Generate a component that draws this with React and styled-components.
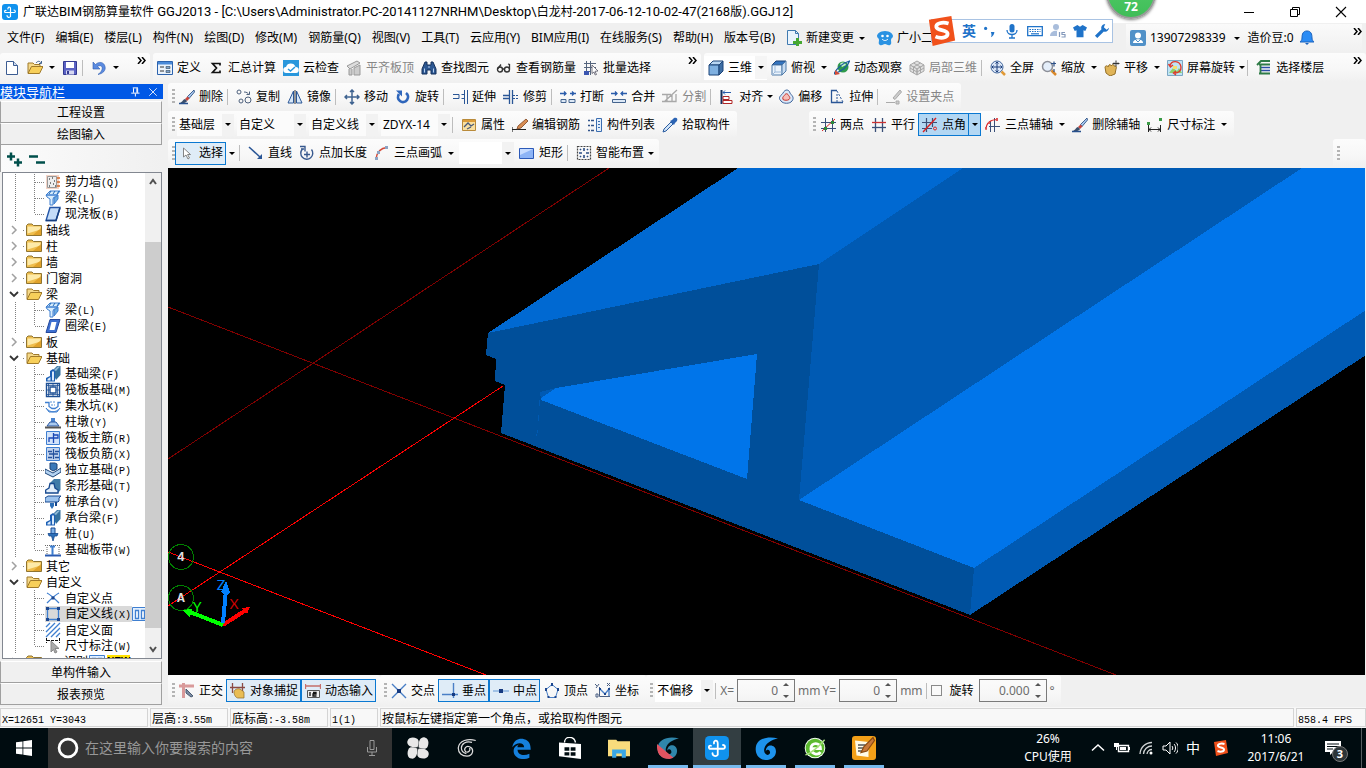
import React from 'react';
import styled, { createGlobalStyle } from 'styled-components';

const GlobalStyle = createGlobalStyle`
    * { box-sizing: border-box; }
    body {
        margin: 0;
        overflow: hidden;
        background: #f0f0f0;
        color: #000;
        font: 12px/16px "Noto Sans", "Noto Sans CJK SC", sans-serif;
    }
    button, input, select {
        font: inherit;
        color: inherit;
        margin: 0;
    }
    button { border: 0; padding: 0; background: none; }
    ul { list-style: none; margin: 0; padding: 0; }
    svg { flex: none; display: block; }
`;

const simsun = '"Noto Sans CJK SC", sans-serif';

const Window = styled.div`
    display: flex;
    flex-direction: column;
    height: 100vh;
`;

/* ---------- title and menu ---------- */

const TitleBar = styled.header`
    position: relative;
    display: flex;
    align-items: center;
    height: 23px;
    flex: none;
    padding: 0 2px;
    background: #fff;
`;

const Title = styled.h1`
    flex: 1;
    margin: 0 0 0 5px;
    font-size: 12px;
    font-weight: normal;
    white-space: nowrap;
`;

const TitleLatin = styled.span`
    font: 13px/16px Roboto, sans-serif;
`;

const WindowButton = styled.button`
    display: flex;
    justify-content: center;
    width: 46px;
    height: 22px;
    align-items: center;
`;

const Ball = styled.div`
    position: absolute;
    top: -33px;
    right: 210px;
    width: 50px;
    height: 52px;
    padding-top: 30px;
    border: 2px solid #9a9a9a;
    border-radius: 50%;
    background: linear-gradient(#58d06c, #3fbd58);
    box-shadow: 0 1px 3px rgba(0, 0, 0, 0.5);
    color: #fff;
    font-weight: bold;
    text-align: center;
    z-index: 2;
`;

const Ime = styled.div`
    position: absolute;
    top: 19px;
    right: 253px;
    display: flex;
    align-items: center;
    gap: 7px;
    width: 182px;
    height: 24px;
    padding-left: 30px;
    border: 1px solid #a9c3e3;
    background: #fff;
    color: #1f73c9;
    font-weight: bold;
    font-size: 14px;
    z-index: 2;
`;

const ImeLogo = styled.span`
    position: absolute;
    left: -5px;
    top: -4px;
`;

const MenuBar = styled.nav`
    display: flex;
    align-items: center;
    flex: none;
    height: 30px;
    padding: 0 4px 0 7px;
    gap: 11px;
`;

const MenuItem = styled.button`
    display: flex;
    align-items: center;
    gap: 4px;
    white-space: nowrap;
`;

const Account = styled.div`
    display: flex;
    align-items: center;
    gap: 5px;
    height: 28px;
    margin-left: auto;
    padding-left: 4px;
    width: 236px;
    background: linear-gradient(#fafafa, #f0f0f0);
`;

/* ---------- toolbars ---------- */

const ToolRow = styled.div`
    display: flex;
    flex: none;
    height: ${p => p.$h || 28}px;
    gap: ${p => p.$close ? 0 : 3}px;
    padding-bottom: 1px;
`;

const Bar = styled.div`
    display: flex;
    align-items: center;
    flex: ${p => p.$grow ? '1 1 0' : 'none'};
    width: ${p => p.$w ? p.$w + 'px' : 'auto'};
    margin-left: ${p => p.$push || '0'};
    padding: 0 4px 0 ${p => p.$grip ? 4 : 0}px;
    border-radius: 3px;
    background: linear-gradient(#fcfcfc, #f7f7f7 60%, #f0f0f0);
`;

const Grip = styled.i`
    width: 3px;
    height: 15px;
    flex: none;
    background: repeating-linear-gradient(#b4b4b4 0 2px, transparent 2px 4px);
`;

const ToolButton = styled.button`
    display: flex;
    align-items: center;
    gap: 4px;
    flex: none;
    height: 23px;
    padding: 0 2px 0 3px;
    border: 1px solid ${p => p.$on ? '#0a78d1' : 'transparent'};
    background: ${p => p.$on === 'deep' ? '#b3d7f3' : p.$on ? '#dfecf7' : 'transparent'};
    color: ${p => p.disabled ? '#868686' : '#000'};
    white-space: nowrap;
`;

const Split = styled.div`
    display: flex;
    align-items: center;
    height: 24px;
    background: #fff;
`;

const ArrowButton = styled.button`
    display: flex;
    align-items: center;
    justify-content: center;
    flex: none;
    width: ${p => p.$tight ? 8 : 12}px;
    height: 23px;
    border: ${p => p.$on ? '1px solid #0a78d1' : '0'};
    border-left: 0;
    background: ${p => p.$on ? '#b3d7f3' : p.$plain ? '#f5f5f5' : 'transparent'};
`;

const Triangle = styled.i`
    border: 3px solid transparent;
    border-top-color: currentColor;
    border-bottom: 0;
`;

const Separator = styled.i`
    width: 1px;
    height: 16px;
    margin: 0 4px 0 1px;
    background: #bdbdbd;
`;

const More = styled.button`
    margin: 4px 0 0 auto;
    align-self: flex-start;
`;

const ComboBox = styled.label`
    display: flex;
    align-items: center;
    flex: none;
    height: 22px;
    width: ${p => p.$w}px;
    margin: 0 1px 0 2px;
    background: ${p => p.$white ? '#fff' : '#fbfbfb'};
`;

const Select = styled.select`
    flex: 1;
    min-width: 0;
    height: 22px;
    padding: 0 0 0 2px;
    border: 0;
    background: transparent;
    appearance: none;
`;

const ComboArrow = styled.span`
    display: flex;
    align-items: center;
    justify-content: center;
    width: 12px;
    height: 22px;
    background: #f2f2f2;
`;

const Spin = styled.label`
    display: flex;
    align-items: center;
    flex: none;
    gap: 3px;
    margin-right: 2px;
    color: #6d6d6d;
`;

const SpinBox = styled.span`
    display: flex;
    align-items: center;
    width: ${p => p.$wide ? 68 : 58}px;
    height: 23px;
    border: 1px solid #7a7a7a;
`;

const SpinInput = styled.input`
    flex: 1;
    min-width: 0;
    height: 20px;
    border: 0;
    padding: 0;
    background: transparent;
    text-align: right;
`;

const SpinArrows = styled.span`
    display: flex;
    flex-direction: column;
    justify-content: space-between;
    width: 16px;
    height: 15px;
    align-items: center;
`;

const UpDown = styled.i`
    border: 3px solid transparent;
    border-${p => p.$up ? 'bottom' : 'top'}-color: #555;
    border-${p => p.$up ? 'top' : 'bottom'}: 0;
`;

const Check = styled.label`
    display: flex;
    align-items: center;
    gap: 8px;
    margin-right: 5px;
`;

const Tick = styled.input`
    appearance: none;
    width: 11px;
    height: 11px;
    border: 1px solid #8a8a8a;
    background: #fafafa;
`;

/* ---------- navigation panel ---------- */

const Body = styled.div`
    display: flex;
    flex: 1;
    min-height: 0;
`;

const Panel = styled.aside`
    display: flex;
    flex-direction: column;
    flex: none;
    width: 164px;
    padding: 1px 1px 2px 0;
    margin-right: 4px;
    font-family: ${simsun};
`;

const PanelTitle = styled.div`
    display: flex;
    align-items: center;
    flex: none;
    gap: 6px;
    height: 15px;
    padding-right: 4px;
    margin-bottom: 2px;
    background: #0058e6;
    color: #fff;
    font-size: 13px;
    line-height: 15px;
`;

const PanelName = styled.span`
    flex: 1;
`;

const PanelButton = styled.button`
    flex: none;
    height: 22px;
    margin-right: 1px;
    border: 1px solid #a0a0a0;
    border-top-color: #fff;
    background: #f0f0f0;
    line-height: 18px;
`;

const PanelTools = styled.div`
    display: flex;
    align-items: center;
    flex: none;
    gap: 7px;
    height: 27px;
    padding-left: 5px;
    border-left: 1px solid #a0a0a0;
    background: linear-gradient(90deg, #fbfbfb, #f0f0f0);
`;

const TreeBox = styled.div`
    display: flex;
    flex: 1;
    min-height: 0;
    margin: 0 1px 2px 2px;
    border: 1px solid #828790;
    background: #fff;
`;

const Tree = styled.ul`
    flex: 1;
    min-width: 0;
    padding-top: 1px;
    overflow: hidden;
`;

const Row = styled.li`
    display: flex;
    align-items: center;
    height: 16px;
    white-space: nowrap;
`;

const Chevron = styled.button`
    width: 10px;
    height: 16px;
    margin: 0 4px 0 6px;
`;

const Dots = styled.i`
    width: ${p => p.$w}px;
    height: 1px;
    flex: none;
    margin-right: 1px;
    background: repeating-linear-gradient(90deg, #808080 0 1px, transparent 1px 2px);
`;

const Guide = styled.i`
    width: 1px;
    height: ${p => p.$half ? 8 : 16}px;
    align-self: flex-start;
    flex: none;
    margin-left: ${p => p.$root ? 12 : 18}px;
    background: repeating-linear-gradient(#808080 0 1px, transparent 1px 2px);
`;

const Node = styled.button`
    display: flex;
    align-items: center;
    gap: 4px;
    height: 16px;
    padding-right: 1px;
    background: ${p => p.$on ? '#d9d9d9' : 'transparent'};
`;

const Latin = styled.span`
    font: 10px/16px "Liberation Mono", monospace;
`;

const NewTag = styled.b`
    margin-left: 2px;
    background: #ffe100;
    font: bold 10px/14px "Liberation Sans", sans-serif;
`;

const Scroll = styled.div`
    display: flex;
    flex-direction: column;
    width: 16px;
    background: #f0f0f0;
`;

const ScrollButton = styled.button`
    display: flex;
    align-items: center;
    justify-content: center;
    height: 18px;
`;

const Thumb = styled.div`
    flex: 1;
    margin: 51px 0 12px;
    background: #cdcdcd;
`;

/* ---------- work area ---------- */

const Work = styled.main`
    display: flex;
    flex-direction: column;
    flex: 1;
    min-width: 0;
`;

const View = styled.div`
    flex: 1;
    min-height: 0;
    margin-right: 1px;
    background: #000;
`;

const Drawing = styled.svg`
    width: 100%;
    height: 100%;
`;

const StatusBar = styled.footer`
    display: flex;
    flex: none;
    gap: 2px;
    height: 21px;
    padding: 1px 0;
    background: #f7f7f7;
    font-family: ${simsun};
`;

const Cell = styled.span`
    flex: ${p => p.$w ? 'none' : 1};
    width: ${p => p.$w}px;
    padding-left: 1px;
    border: 1px solid #d4d4d4;
    line-height: 17px;
    white-space: nowrap;
    background: #f8f8f8;
`;

/* ---------- taskbar ---------- */

const Taskbar = styled.footer`
    display: flex;
    align-items: center;
    flex: none;
    height: 40px;
    background: #000c10;
    color: #fff;
`;

const Start = styled.button`
    display: flex;
    align-items: center;
    justify-content: center;
    width: 48px;
    height: 40px;
`;

const Search = styled.label`
    display: flex;
    align-items: center;
    gap: 6px;
    width: 344px;
    height: 40px;
    padding: 0 12px 0 9px;
    background: #333;
`;

const SearchInput = styled.input`
    flex: 1;
    min-width: 0;
    border: 0;
    padding: 0;
    background: transparent;
    font-size: 14px;
    &::placeholder { color: #989898; opacity: 1; }
`;

const AppGroup = styled.div`
    display: flex;
    gap: 1px;
    margin-left: ${p => p.$gap}px;
`;

const AppButton = styled.button`
    display: flex;
    align-items: center;
    justify-content: center;
    width: 48px;
    height: 40px;
    background: ${p => p.$active
        ? 'linear-gradient(#333e42 37px, #76b9ed 37px)'
        : p.$open ? 'linear-gradient(#76b9ed, #76b9ed) center bottom / 40px 3px no-repeat' : 'none'};
`;

const Tray = styled.div`
    display: flex;
    align-items: center;
    gap: 8px;
    height: 40px;
    margin-left: auto;
`;

const TwoLines = styled.div`
    text-align: center;
    line-height: 18px;
    width: ${p => p.$w}px;
`;

const Lang = styled.span`
    margin-right: 5px;
    font-size: 14px;
`;

const Notice = styled.span`
    position: relative;
    width: 26px;
    padding-left: 2px;
`;

const NoticeCount = styled.b`
    position: absolute;
    left: 9px;
    top: 6px;
    width: 16px;
    height: 16px;
    border: 1px solid #777;
    border-radius: 50%;
    background: #2c3538;
    font-size: 11px;
    line-height: 14px;
    text-align: center;
`;

const ShowDesktop = styled.i`
    width: 5px;
    height: 40px;
    border-left: 1px solid #555d60;
    margin-left: 4px;
`;

/* ---------- icons, all on a 16px grid ---------- */

const navy = '#1d4478';
const blue = '#3f7fd0';

const brush = <>
    <path d="M15 1 8.500 7.500 10 9.500 15.500 3z" fill="#a9c8ef" stroke={navy} strokeWidth=".8" />
    <path d="M8.500 7.500 6 10l2 2 2.500-2.500z" fill="#c8453b" />
    <path d="M6 10c-2 0-2 3-5 3.500 3 1.500 6 .5 7-1.500z" fill="#3b4f6b" />
    <path d="M0 14.500h9" stroke="#27508e" strokeWidth="1.500" />
</>;
const folderBody = <>
    <path d="M.5 3.500 2 2h4l1.500 1.500h8v10H.5z" fill="#efbe4e" stroke="#8f7430" />
    <path d="M1.500 4.500h13v3l-13 4z" fill="#fdeaa9" />
    <path d="M15 6v7H7z" fill="#d58f14" opacity=".6" />
</>;
const folderOpen = <>
    <path d="M1 13V3h5l1.500 1.500H13V7" fill="#f5d98a" stroke="#a07a2a" />
    <path d="M1 13.500 4.500 6.500H16L12.500 13.500z" fill="#f7cf5a" stroke="#a07a2a" />
</>;
const magnify = <>
    <circle cx="6.500" cy="6.500" r="5" fill="#e4eefa" stroke="#8c8f98" strokeWidth="1.500" />
    <path d="m10.500 10.500 4.500 4.500" stroke="#d9892b" strokeWidth="2.500" />
</>;
const beamBlue = <>
    <path d="M7 5 12 0h3.500v9L11 14z" fill="#33719f" />
    <path d="M1 15.500V12l4-2V5l3-2 2 2v10.500z" fill="#1c5fb4" />
    <path d="M2.500 14.500V13l3-2v3.500zM7 14.500V6l1-1 1 1v8.500z" fill="#d9eafb" />
    <path d="m9 4 4-3.500h2L11 5z" fill="#8fb9d6" />
</>;

const icons = {
    newFile: <><path d="M2.500 1.500h7l4 4v9h-11z" fill="#fff" stroke="#3c5c92" /><path d="M9.500 1.500v4h4" fill="#cfdcf0" stroke="#3c5c92" /></>,
    open: <>{folderOpen}<path d="M9 3c2-2.500 4-2 5 0M14.500 1v2.500H12" fill="none" stroke="#44648e" /></>,
    save: <><path d="M1.500 1.500h13v13h-13z" fill="#5b62c4" stroke="#343a92" /><path d="M4 2h8v6H4z" fill="#fff" /><path d="M4 10.500h8v4H4z" fill="#d6d8f1" /><path d="M5 11h2v3H5z" fill="#343a92" /></>,
    undo: <path d="M2 2v7h7L6.500 6.500c3-2 5.500 0 4.500 3-.5 2-2 3.500-4 5 5-1 8-4 7-8C13 2 8 1 4.500 4.500z" fill="#5b8be0" stroke="#2e5db0" strokeWidth=".6" />,
    define: <><path d="M.5 1.500h15v13H.5z" fill="#eaf2fb" stroke="#2c63ae" /><path d="M1 2h14v2.500H1z" fill="#4a8ad8" /><path d="M3 7h4M3 11h4" stroke="#333" /><path d="M9 6.500h4v2H9zM9 10.500h4v2H9z" fill="#7da3cf" stroke="#345" strokeWidth=".6" /></>,
    sigma: <path d="M12 5.500V3.500H4.500L8.500 8l-4 4.500H12v-2" fill="none" stroke="#111" strokeWidth="1.700" />,
    cloudCheck: <><path d="M0 0h16v16H0z" fill="#2997dc" /><path d="M3.500 13a3 3 0 0 1-.5-6 5 5 0 0 1 9.500 0 3 3 0 0 1 .5 6z" fill="#fff" /><path d="m5 9 2.500 2 4.500-4" fill="none" stroke="#2997dc" strokeWidth="1.500" /></>,
    slabTop: <><path d="m1 6 10-5 3 2L4 9z" fill="#ddd" stroke="#999" /><path d="M3 9v6h3V9M8 15V8l6-3v10z" fill="#ccc" stroke="#999" /></>,
    binoculars: <><path d="M4 2h2v3h4V2h2l3 7v5h-5v-4H6v4H1V9z" fill="#2c5792" stroke="#14305a" /><path d="M3.500 8.500v4M12.500 8.500v4M7 7h2" stroke="#b9d0ee" /></>,
    glasses: <><circle cx="4" cy="9.500" r="2.500" fill="none" stroke="#333" strokeWidth="1.400" /><circle cx="11" cy="9.500" r="2.500" fill="none" stroke="#333" strokeWidth="1.400" /><path d="M6.500 9h2M2 8.500l3-4M13.500 9V4.500L12 4" stroke="#333" fill="none" strokeWidth="1.300" /></>,
    batch: <><path d="M1 3.500h12M1 7.500h12M1 11.500h6M3.500 1v14M7.500 1v14" stroke="#55657d" fill="none" /><path d="M1 11h5v4H1z" fill="#3a55b0" /><path d="m9 5 6 6-3 .3 1.500 3.200-1.300.5L11 12l-2 1.500z" fill="#fff" stroke="#556" strokeWidth=".8" /></>,
    cube: <><path d="M1 5 5 1h10l-4 4z" fill="#b9d6f2" stroke={navy} /><path d="M1 5h10v10H1z" fill="#7fb0e0" stroke={navy} /><path d="m11 5 4-4v10l-4 4z" fill="#3f6fa5" stroke={navy} /></>,
    topView: <><path d="M1 5 5 1h10l-4 4z" fill="#3474bf" stroke={navy} /><path d="M1 5h10v10H1z" fill="#eaf3fc" stroke="#4f7aa8" /><path d="m11 5 4-4v10l-4 4z" fill="#c9ddf2" stroke="#4f7aa8" /><path d="M4 5v7h7M4 12l-3 3" fill="none" stroke="#9bb8d8" /></>,
    orbit: <><circle cx="9" cy="7" r="5.500" fill="#2f9a4c" /><path d="M6 4c2-2 5-2 6 1l-4 2z" fill="#c4efcd" /><path d="M0 14C3 8 9 3 15.500 1 14 6 8 11 0 14z" fill="none" stroke="#1c5f9e" strokeWidth="1.300" /><path d="m1 10 5 4-5 1z" fill="#d24b38" /></>,
    local3d: <g fill="#e0e0e0" stroke="#a8a8a8"><path d="m8 1 7 4-7 4-7-4z" /><path d="m1 5 7 4v6l-7-4zM15 5 8 9v6l7-4z" /><path d="m4.500 3 7 4v6M11.500 3l-7 4v6M1 8l7 4 7-4" fill="none" /></g>,
    full: <><circle cx="7" cy="7" r="6" fill="#dbe7f8" stroke="#42669c" /><path d="M7 2v10M2 7h10M5.500 3.500 7 2l1.500 1.500M5.500 10.500 7 12l1.500-1.500M3.500 5.500 2 7l1.500 1.500M10.500 5.500 12 7l-1.500 1.500" fill="none" stroke="#1c3f7c" /><path d="m11.500 11.500 3.500 3.500" stroke="#e09a38" strokeWidth="2.500" /></>,
    zoom: <>{magnify}<path d="M10 3.500h5M13 1.500v5M13 9v3" stroke="#2c4f86" strokeWidth="1.200" /></>,
    hand: <><path d="M1 7c1-2 3-1 3 0l1-2c1-1 2 0 2 1l1-1c1-1 2 0 2 1l1 0c1 0 2 1 1 3l-1 5-5 2-4-3z" fill="#e0b458" stroke="#94702a" /><path d="M9 3.500h6M12 .5v6M10 2.500l-1 1 1 1M14 2.500l1 1-1 1" stroke="#333" fill="none" /></>,
    rotateView: <><path d="M.5.5h15v15H.5z" fill="#bfe3f5" stroke="#7ba7c4" /><path d="m2 13 4-5 4 3 2-3 3 5z" fill="#8fd06a" /><path d="M6 6h4v3H6z" fill="#f4e070" /><path d="M3 6c1-6 10-6 11 1 .5 4-3 6-6 6M1.500 4l2 3 2.500-2M9 11l-2.500 2L9 15" fill="none" stroke="#df3b2e" strokeWidth="1.400" /></>,
    floors: <><path d="m1 5 4-4h9M3 4.500h11" fill="none" stroke="#2e7b46" strokeWidth="1.800" /><path d="M5 7.500h9M5 10.500h9" stroke="#2b4da5" strokeWidth="1.500" /><path d="M4.500 5v9M3 13.500h11" stroke="#2e7b46" strokeWidth="1.800" /></>,
    brush,
    copy: <g fill="none" stroke="#4d607c"><circle cx="3" cy="3" r="2" /><circle cx="12" cy="11" r="3" /><circle cx="5" cy="12" r="2" /><path d="M8 3c3 0 4 1 5 3M10.500 5.500h3V2.500" /></g>,
    mirror: <><path d="M6.500 2v12H1zM9.500 2v12H15z" fill="#d8e8f8" stroke="#2a5696" /><path d="M8 1v14" stroke="#333" /></>,
    move: <path d="M8 1v14M1 8h14M6 3l2-2 2 2M6 13l2 2 2-2M3 6 1 8l2 2M13 6l2 2-2 2" fill="none" stroke="#3f6390" strokeWidth="1.500" />,
    rotate: <><path d="M4 5a5 5 0 1 0 7-1" fill="none" stroke="#2f66bb" strokeWidth="2.800" /><path d="M1 1.500h6v6z" fill="#2f66bb" /></>,
    extend: <path d="M1 5.500h6v4H1M9.500 5.500h3v4h-3M12.500 1v14M15.500 1v14" fill="none" stroke="#2a5696" />,
    trim: <><path d="M0 6.500h6M0 9.500h6M6.500 1v14M9.500 1v14" stroke="#2a5696" strokeWidth="1.300" /><path d="M10 6.500h6M10 9.500h6" stroke="#2a5696" strokeDasharray="2 1" /></>,
    breakIt: <><path d="M1 10.500h5v3H1zM9 10.500h6v3H9z" fill="#dce8f6" stroke="#44648e" /><path d="M0 4.500h6M16 4.500h-6M4 2.500 6 4.500 4 6.500M12 2.500l2 2-2 2" fill="none" stroke="#2a5cab" strokeWidth="1.300" /></>,
    merge: <><path d="M1.500 10.500h13v3h-13z" fill="#dce8f6" stroke="#44648e" /><path d="M0 4.500h6M16 4.500h-6M4 2.500 6 4.500 4 6.500M12 2.500 10 4.500l2 2" fill="none" stroke="#2a5cab" strokeWidth="1.300" /></>,
    divide: <path d="M0 5.500h9M0 12.500h14V5M3 12l12-11M5 5v7M10 6v6" fill="none" stroke="#a8a8a8" strokeWidth="1.300" />,
    align: <><path d="M2.500 1v14" stroke="#16305c" strokeWidth="2" /><path d="M4 3.500h8M6 1.500 4 3.500l2 2" stroke="#2a5cab" fill="none" /><path d="M4 7.500h6v3H4zM4 11.500h9v3H4z" fill="#fff" stroke="#b02525" /></>,
    offset: <><path d="M3 12C-1 8 4 6 5 4c2-4 6-4 7 0 1 2 5 4 2 8-2 3-9 3-11 0z" fill="#dbe8f8" stroke="#3d639a" /><path d="M5 10.500c-1-3 1-3 2-5 1-1 2-1 3 0 1 2 3 3 1 5-1 1-5 1-6 0z" fill="#f6bdb8" stroke="#c8352c" /></>,
    stretch: <><path d="M8 1.500H2.500v12H14" fill="none" stroke="#2a5696" strokeWidth="1.300" /><path d="m8 2 6 11" stroke="#2a5696" strokeDasharray="2 1.500" /><path d="M8 5v8" stroke="#2a5696" strokeDasharray="2 1" /></>,
    grips: <><path d="m14 1-7 8 2 1.500L15.500 3z" fill="#ccc" stroke="#aaa" /><path d="M0 13.500h9M10 12h3v3h-3z" stroke="#aaa" fill="#ccc" /></>,
    props: <><path d="M1.500 2.500h13v11h-13z" fill="#f9dfa0" stroke="#b98a3a" /><path d="M2 3h12v2H2z" fill="#dd9c38" /><path d="m3 10 4-4 3 3 3-2M6 12l4-2" fill="none" stroke="#4a5a78" strokeWidth="1.300" /></>,
    editBar: <><path d="M0 12.500h14M0 10v5" stroke="#222" strokeWidth="1.200" /><path d="m5 12 1-3 8-7 2 2-7 7z" fill="#d98e54" stroke="#7e4420" strokeWidth=".8" /></>,
    list: <><path d="M1 3.500h2M1 8.500h2M1 13.500h2M4 3.500h3M4 8.500h3M4 13.500h3" stroke="#33558c" strokeWidth="1.500" /><path d="M9.500 1.500h5v13h-5z" fill="#e4effb" stroke="#3b6db0" /><path d="M11 4.500h2M11 7.500h2M11 10.500h2" stroke="#3b6db0" /></>,
    dropper: <><path d="m1 15 1-3 7-7 2 2-7 7z" fill="#cfe3f8" stroke="#2b5ca0" /><path d="m8 4 2-1 2-2c3-1 4 1 3 3l-2 2-1 2z" fill="#2c64b4" /></>,
    twoPoint: <><path d="M5.500 1v14M12.500 1v14M1 5.500h15M1 11.500h15" stroke="#3a4f78" /><path d="m2 14 13-12" stroke="#d22" /><path d="M4 10h3v3H4zM11 4h3v3h-3z" fill="#2e8a3a" /></>,
    parallel: <><path d="M4.500 1v14M11.500 1v14" stroke="#3a4f78" strokeWidth="1.300" /><path d="M1 5.500h14" stroke="#c33" strokeWidth="1.300" /><path d="M1 10.500h14" stroke="#3a4f78" strokeWidth="1.300" /></>,
    pointAngle: <><path d="M4.500 1v14M10.500 1v9M0 5.500h15M0 11.500h10" stroke="#3a4f78" strokeWidth="1.200" /><path d="m1 15 13-14" stroke="#d22" strokeWidth="1.400" /><circle cx="13" cy="11.500" r="1.500" fill="none" stroke="#d22" /></>,
    threeAxis: <><path d="M5.500 4v11M9.500 1v14M4 9.500h11" stroke="#3a4f78" /><path d="M1 13C1 6 5 2.500 13 2.500" fill="none" stroke="#d22" strokeWidth="1.200" /><path d="M0 10h2v2H0zM3 5h2v2H3zM11 1h2v3h-2z" fill="#d55" /></>,
    dimension: <><path d="M1.500 8v7M13.500 8v7M2 12.500h11M4 10.500l-2 2 2 2M11 10.500l2 2-2 2" fill="none" stroke="#222" /><path d="M0 5h3v3H0zM12 1h3v3h-3z" fill="#3a9a46" /></>,
    cursor: <path d="M4.500 3v9L7 10l2 4 1.500-1-2-3.500h3z" fill="#fff" stroke="#777" strokeWidth=".9" />,
    line: <><path d="m1 2 11 10" stroke="#2a5696" strokeWidth="1.500" /><path d="M14 9v5H9z" fill="#2a5696" /></>,
    addLength: <><path d="M12.500 4.500a6 6 0 1 1-9-.5M5 9.500h6M8 6.500v6" fill="none" stroke="#38598e" strokeWidth="1.400" /><path d="M1 1.500h5v5M2 4h3" stroke="#38598e" fill="none" strokeWidth="1.400" /></>,
    arc: <><path d="M2 14C3 7 6 3 13 2.500" fill="none" stroke="#d24a3a" strokeWidth="1.500" /><path d="M1 12h3v3H1zM3 6h3v3H3zM11 1h3v3h-3z" fill="#8ba4c4" /></>,
    rect: <><path d="M.5 3.500h14v10H.5z" fill="#8db4f6" stroke="#2b59b8" /><path d="M1 4h13L1 10z" fill="#c7dcff" /></>,
    smart: <><path d="M1.500 1.500h13v13h-13z" fill="none" stroke="#444" strokeDasharray="2 1" strokeWidth="1.200" /><path d="M8 3v3M8 10v3M3 8h3M10 8h3M4 4l1 1M12 4l-1 1M4 12l1-1M12 12l-1-1" stroke="#2a4c82" strokeWidth="1.600" /></>,
    ortho: <><path d="M0 3h15M4.500 0v15" stroke="#d99a9a" strokeWidth="3" /><path d="m7 6 7 7-2 1-5-4z" fill="#7b8ca3" stroke="#4a5a70" /></>,
    snap: <><path d="M0 4.500h15M2.500 0v10M12.500 0v8" stroke="#8a4a44" strokeWidth="1.300" /><path d="M4 9c0-2 3-4 6-3l4 3v6H8c-2 0-4-3-4-6z" fill="#e9bd55" stroke="#8c6a2a" strokeWidth=".7" /></>,
    dynInput: <><path d="M.5 1v5M15.500 1v5M1 3h14" stroke="#c56f6a" strokeWidth="1.300" /><path d="M2.500 7.500h12v7h-12z" fill="#eee" stroke="#555" /><path d="M5 9v4M8 9.500h3v1.500H8V13h3.500" fill="none" stroke="#111" strokeWidth="1.300" /></>,
    cross: <><path d="m1 1 14 14M15 1 1 15" stroke="#4a7fc6" strokeWidth="1.400" /><path d="M6 6h4v4H6z" fill="#163a80" /></>,
    perp: <><path d="M0 11.500h16M11.500 0v15" stroke="#4a7fc6" strokeWidth="1.400" /><path d="M10 10h3v3h-3z" fill="#163a80" /></>,
    mid: <><path d="M0 8h16" stroke="#8db4e0" strokeWidth="1.500" /><path d="M6 6h4v4H6z" fill="#163a80" /></>,
    vertex: <><path d="m8 1.500 6 5-2.500 8h-7L2 6.500z" fill="none" stroke="#4a7fc6" /><path d="M7 0h2v3H7zM1 5h2v3H1zM13 5h2v3h-2zM3.500 13h2v2h-2zM10.500 13h2v2h-2z" fill="#1d478f" /></>,
    coord: <><path d="M4.500 4v9.500H15M0 1l2 2M4 1 1 5M12 0l3 3M15 0l-3 3M1 11h2v3H1z" fill="none" stroke="#4b5f82" /><path d="m5 6 5 5 4-5v7" fill="none" stroke="#4a7fc6" strokeWidth="1.400" /><path d="M4 5h2v2H4zM9 10h2v2H9zM13 5h2v2h-2z" fill="#1d478f" /></>,
    folder: folderBody,
    folderOpen,
    wall: <><path d="M1 1h13v14H1z" fill="#f4d3c5" /><path d="M2.500 2.500h9v11h-9z" fill="#eee" stroke="#999" /><path d="M4 5h1M7 4h1M9 7h1M5 9h1M8 10h1M4 12h1M10 12h1" stroke="#555" strokeWidth="1.300" /><path d="M12 4h3M12 8h3M12 12h3" stroke="#d2692c" strokeWidth="1.500" /></>,
    beam: <><path d="m1 5 4-4h10l-3 4zM1 5h11v2H9l-1 2v6H5V9L2 7z" fill="#d9edfc" stroke={blue} /><path d="m9 8 4-3v4l-4 5z" fill="#69a8de" stroke={blue} /><path d="m4 4 2-3M8 4l2-3M12 4l2-3" stroke="#1e69b8" /></>,
    slab: <><path d="M5 1.500h10L11 14.500H1z" fill="#c4dcf8" stroke="#2456a8" strokeWidth="1.400" /><path d="M1 14.500h10L15 2" fill="none" stroke="#173f80" strokeWidth="1.500" /></>,
    ring: <><path d="M5 1.500h10L11 14.500H1z" fill="#3d6fd0" stroke="#23489c" /><path d="M6.500 4h5L9.500 12h-5z" fill="#fff" /></>,
    foundBeam: beamBlue,
    raft: <><path d="M1.500 1.500h13v13h-13zM5 5h6v6H5z" fill="none" stroke="#1d4f94" strokeWidth="1.400" /><path d="M8 1v4M8 11v4M1 8h4M11 8h4M1 3.500h14M1 12.500h14M3.500 1v14M12.500 1v14" stroke="#1d4f94" strokeWidth=".8" /></>,
    pit: <><path d="M0 4.500h4v4l3 2h3l3-2v-4h3" fill="none" stroke={blue} strokeWidth="1.300" /><path d="M1 10c4 5 10 5 14 0l-3 4H4z" fill="#b9d6f6" stroke={blue} /><path d="M5 4h6M6 7h4" stroke="#5a94d8" strokeDasharray="2 1" /></>,
    pier: <><path d="M6 4h4v4H6z" fill="#4b84d0" /><path d="m5 8-3 4h12l-3-4z" fill="#a9caf0" stroke="#2a56a0" /><path d="M0 13.500h16" stroke="#555" strokeWidth="2" /></>,
    mainBar: <><path d="M1.500 1.500h13v13h-13z" fill="#d3e3fa" stroke={blue} /><path d="M8.500 3v10M4 12V8h9V5H8" fill="none" stroke="#1947b5" strokeWidth="1.300" /></>,
    negBar: <><path d="M1.500 1.500h13v13h-13z" fill="#c3d4ee" stroke={blue} /><path d="M8.500 3v10M3 5.500h4M10 5.500h4M4 8h9M3 11.500h4M10 11.500h4" fill="none" stroke="#24509c" strokeWidth="1.300" /></>,
    isolated: <><path d="m0 7 8 4 8-5v4l-8 5-8-4z" fill="#b4d3f2" stroke={navy} /><path d="M5 1h5l2 1v5l-4 2-3-2z" fill="#3a78b8" stroke={navy} /></>,
    strip: <><path d="m5 5 4-4h6.500v11L13 15l-3-5z" fill="#3f7ba8" /><path d="M.7 15v-3l3.300-2 1-4.500h4l1 4.500 3 2v3z" fill="#e3effb" stroke="#17498f" strokeWidth="1.300" /></>,
    cap: <><path d="m0 4 3-2h13l-2 2v3l-1 1H0z" fill="#9cc3ee" stroke="#17498f" /><path d="M5 9h4v3l-2 3-2-3z" fill="#2c6fb8" /><path d="M10 8h2v4h-2z" fill="#17498f" /></>,
    capBeam: beamBlue,
    pile: <><path d="M6 2h4v6H6z" fill="#7eb1e8" stroke="#17498f" /><path d="M3 7.500h10l-1 2.500H9.500L8 15l-1.500-5H4z" fill="#2c6fb8" stroke="#17498f" strokeWidth=".8" /></>,
    stripBand: <><path d="M0 3.500h16" stroke="#666" strokeDasharray="1 1" /><path d="M0 13.500h16" stroke="#2a5ab0" strokeWidth="2" /><path d="M2 5v8M14 5v8" stroke="#666" strokeDasharray="1 1" /><path d="M7.500 4v9M5 4.500h5" stroke={blue} strokeWidth="2" /></>,
    customPoint: <><path d="M2 3c4 2 8 6 12 10M14 3C10 5 6 9 2 13" fill="none" stroke={blue} strokeWidth="1.300" /><path d="M6.500 6.500h3v3h-3z" fill="#1d478f" /></>,
    customLine: <><path d="M2.500 2.500h11v11h-11z" fill="none" stroke={blue} strokeWidth="1.300" /><path d="M1 1h3v3H1zM12 1h3v3h-3zM1 12h3v3H1zM12 12h3v3h-3z" fill="#1d478f" /></>,
    hatch: <path d="M1 5l4-4M1 10l9-9M1 15 15 1M6 15l9-9M11 15l4-4" stroke={blue} strokeWidth="1.300" />,
    dimTree: <><path d="M1.500 0v5M14.500 0v5M2 2.500h12" stroke="#111" strokeDasharray="3 1" /><path d="M6 3v11l2.500-2.500L10 15l2-1-2-3.500h4z" fill="#aaa" stroke="#888" /></>,
    mini: <><path d="M.5 1.500h15v13H.5z" fill="#e3f0ff" stroke={blue} /><path d="M3.500 4.500h3v8h-3zM9.500 4.500h3v8h-3z" fill="#fff" stroke={blue} strokeWidth="1.300" /></>,
    phone: <><rect width="16" height="16" rx="2" fill="#5191c8" /><circle cx="8" cy="5.500" r="3" fill="#fff" /><path d="M3 13c0-5 10-5 10 0z" fill="#fff" /><path d="m5 9 3 3 3-3" fill="none" stroke="#5191c8" /></>,
    bell: <><path d="M8 1c4 0 5 3 5 7 0 2 1 3 2 4H1c1-1 2-2 2-4 0-4 1-7 5-7z" fill="#2b8cf5" stroke="#1a62bd" /><path d="M6 13h4l-2 2z" fill="#1a62bd" /></>,
    change: <><path d="M1.500.5h8l3 3v11h-11z" fill="#eaf4fd" stroke="#3f7ab0" /><path d="M9.500.5v3h3" fill="none" stroke="#3f7ab0" /><path d="M10 8h3v3h3v3h-3v2h-3v-2H7v-3h3z" fill="#46a832" /></>,
    mascot: <><path d="M8 1c5 0 8 3 8 5s-2 2-2 4 1 4-1 5-3-1-5-1-3 2-5 1-1-3-1-5-2-2-2-4 3-5 8-5z" fill="#2a92e2" /><circle cx="5.500" cy="6" r="1.300" fill="#fff" /><circle cx="10.500" cy="6" r="1.300" fill="#fff" /><path d="M5 9c2 2 4 2 6 0" fill="none" stroke="#fff" /></>,
    logo: <><rect width="16" height="16" rx="3" fill="#1092ee" /><path d="M8.500 12.500V5c0-3-3-2-2.500 0M3 8.500h9c2 0 1.500-2.500 0-2.500M8.500 12.500c-1 1.500-3.500 1-3.500-1M3.500 8.500C2 8 2.500 6 4 6.500" fill="none" stroke="#fff" strokeWidth="1.200" strokeLinecap="round" /></>,
    sogou: <><path d="m1 2 12-2 2 13L3 16z" fill="#f1511b" /><path d="M11.500 4C8 3 4.500 4 5 6s6 1 6 3.500S7 12 4.500 11" fill="none" stroke="#fff" strokeWidth="2" /></>,
    mic: <><rect x="5.500" y="1" width="5" height="8.500" rx="2.500" fill="currentColor" /><path d="M3 7c0 6 10 6 10 0M8 12v3M5 15h6" fill="none" stroke="currentColor" strokeWidth="1.300" /></>,
    micLine: <path d="M6 .5h4v9H6zM3.500 7v5h9V7M8 12v3.500M5 15.500h6" fill="none" stroke="#9a9a9a" />,
    keyboard: <><path d="M.7 3.700h14.600v9H.7z" fill="none" stroke="currentColor" strokeWidth="1.300" /><path d="M2.500 6.500h11M2.500 8.500h11" stroke="currentColor" strokeDasharray="1.500 1" /><path d="M4 10.800h8" stroke="currentColor" strokeWidth="1.200" /></>,
    person: <><circle cx="6" cy="4" r="3" fill="#a9bddb" /><path d="M0 13c0-7 12-7 12 0z" fill="#a9bddb" /><path d="M7 8h9v7H7z" fill="#fff" /><path d="M9.500 9v5M15 9.500h-3v2h3V14h-3.500" fill="none" stroke="#8499bb" strokeWidth="1.200" /></>,
    shirt: <path d="m5 1 3 2 3-2 5 3-2 4-2-1v8H4V7L2 8 0 4z" fill="currentColor" />,
    wrench: <path d="M12 0c-3 0-5 3-4 5.500L1 12.500 3.500 15l7-7C13 9 16 7 16 4l-2.500 2-3-2.500z" fill="currentColor" />,
    comma: <><circle cx="3" cy="5" r="1.800" fill="currentColor" /><path d="M9 9h4c0 3-2 5-4 6 1-2 1-3 0-6z" fill="currentColor" /></>,
    winLogo: <path d="m0 2.300 6.500-.9v6.200H0zM7.300 1.300 16 0v7.600H7.300zM0 8.400h6.500v6.200L0 13.700zM7.300 8.400H16V16l-8.700-1.300z" fill="#fff" />,
    ringO: <circle cx="8" cy="8" r="6.500" fill="none" stroke="#fff" strokeWidth="2" />,
    pinwheel: <g fill="#e8e8e8"><path d="M7.700 7.500C3 8-.5 6 .3 3 1 0 5 0 7 1c2 1 1.700 3 .7 6.500z" /><path d="M8.500 7.700C8 3 10-.5 13 .3c3 .7 3 4.700 2 6.700-1 2-3 1.700-6.500.7z" /><path d="M8.300 8.500C13 8 16.500 10 15.700 13c-.7 3-4.700 3-6.700 2-2-1-1.700-3-.7-6.500z" /><path d="M7.500 8.300C8 13 6 16.500 3 15.700 0 15 0 11 1 9c1-2 3-1.700 6.500-.7z" /></g>,
    swirlLine: <path d="M15 2C9 0 1.500 2 1 8c0 4 3 6.500 7 6.500 5 0 6-6 2-7.500-3-1-5 2-3 4 2 1 4-1 3-3M12 3.500C7 2 3.500 5 3.500 8c0 3 2 4 4 4.500" fill="none" stroke="#ddd" />,
    edge: <path d="M1 7C2 1 7 0 10 1c4 1 5 4 5 8H5c0 4 5 5 9 3v3C7 18 2 14 2 10c0-3 2-4 4-5-1 1-1 1-1 2h5c0-4-6-4-9 0z" fill="#1580dd" />,
    store: <><path d="m0 4 16 1v11L0 14z" fill="#fff" /><path d="M4 4c0-5 7-5 8 0" fill="none" stroke="#fff" /><path d="M4 7.500h3.500V10H4zM8.500 7.500H12V10H8.500zM4 11h3.500v2.500H4zM8.500 11H12v2.700H8.500z" fill="#000c10" /></>,
    explorer: <><path d="M0 2h6l1 1h9v11H0z" fill="#f9dc7c" /><path d="M3 15V9h10v6h-3v-3H6v3z" fill="#3aa7e6" /></>,
    swirlRed: <><path d="M16 1C9-1 0 1 .5 9c.5 8 13 9 14 2 1-6-7-7-7-1 1-2 3-1 3 1-1 3-5 1-4-3 1-4 5-6 9.500-7z" fill="#2f86ab" /><path d="m0 5 12 10-3 1C2 16-.5 11 0 5z" fill="#e25360" /></>,
    swirl: <path d="M16 1C9-1 0 1 .5 9c.5 9 13 9 14 2 1-6-7-7-7-1 1-2 3-1 3 1-1 3-5 1-4-3 1-4 5-6 9.500-7z" fill="#1d93ec" />,
    greenE: <><circle cx="8" cy="8" r="7.500" fill="#f2fff0" /><circle cx="8" cy="8" r="6.800" fill="#5cb92f" /><path d="M12 11c-2 3-7 1-7-2.500 0-5 7-5 7 0H5" fill="none" stroke="#fff" strokeWidth="2" /><path d="M1 13C5 12 12 6 15 2" stroke="#a7e07c" fill="none" /></>,
    notes: <><rect width="16" height="16" rx="2" fill="#f3a018" /><path d="m2 3 9 1v10l-8-1z" fill="#fffbe8" /><path d="M4 6h5M4 8h5M4 10h4" stroke="#555" /><path d="m6 11 2-4 6-6 1 2-5 7z" fill="#c8783a" stroke="#8a4a10" strokeWidth=".8" /></>,
    up: <path d="m2 10.500 6-5.500 6 5.500" fill="none" stroke="#fff" strokeWidth="1.500" />,
    battery: <><path d="M4.500 5.500h10v6h-10z" fill="none" stroke="#fff" strokeWidth="1.400" /><path d="M6 7h6v3H6zM15 7h1v3h-1zM0 3h5v4H3v3H2V7H0z" fill="#fff" /></>,
    wifi: <><path d="M2 14A12 12 0 0 1 14 2.500M5.500 14A8.500 8.500 0 0 1 14 6M9 14a5 5 0 0 1 5-4.500" fill="none" stroke="#cfd3d4" strokeWidth="1.300" /><circle cx="13" cy="13" r="1.500" fill="#fff" /></>,
    sound: <path d="M1 6h3l4-4v12l-4-4H1zM10 6c1 1 1 3 0 4M12 4c2 2 2 6 0 8M14 2.500c3 3 3 8 0 11" fill="none" stroke="#fff" />,
    pin: <path d="M5 2.500h7M6 3v6M10.500 3v6M11.500 3v6M3 9.500h11M8.500 10v4" fill="none" stroke="#fff" strokeWidth="1.300" />,
    close: <path d="m3 3 10 10M13 3 3 13" stroke="currentColor" fill="none" strokeWidth="1.100" />,
    minimize: <path d="M3 8.500h10" stroke="#000" />,
    restore: <path d="M3.500 5.500h7v7h-7zM5.500 5.500v-2h7v7h-2" fill="none" stroke="#000" />,
    expandAll: <path d="M1 5.500h8M5 1.500v8M8 11.500h8M12 7.500v8" stroke="#004f4b" strokeWidth="2.500" />,
    collapseAll: <path d="M0 5.500h9M7 11.500h9" stroke="#004f4b" strokeWidth="2.500" />,
    notice: <><path d="M0 1h16v11H8l-3 3v-3H0z" fill="#fff" /><path d="M2 4h12M2 6.500h12M2 9h6" stroke="#000c10" /></>,
};

const Icon = ({name, size = 16}) => (
    <svg width={size} height={size} viewBox="0 0 16 16" aria-hidden="true">{icons[name]}</svg>
);

const Arrow = ({tight, on, plain, label = '更多'}) => (
    <ArrowButton $tight={tight} $on={on} $plain={plain} aria-label={label}><Triangle /></ArrowButton>
);

const Overflow = () => (
    <More aria-label="更多按钮">
        <svg width="9" height="7"><path d="m1 0 3 3.500L1 7M5 0l3 3.500L5 7" fill="none" stroke="#000" strokeWidth="1.500" /></svg>
    </More>
);

const Tool = ({icon, children, on, off}) => (
    <ToolButton $on={on} disabled={off} aria-label={children ? undefined : icon}>
        <Icon name={icon} />{children && <span>{children}</span>}
    </ToolButton>
);

const Combo = ({w, value, label, white}) => (
    <ComboBox $w={w} $white={white}>
        <Select aria-label={label} defaultValue={value}><option>{value}</option></Select>
        <ComboArrow><Triangle /></ComboArrow>
    </ComboBox>
);

const Spinner = ({before, after, value, wide, label}) => (
    <Spin>
        {before && <span>{before}</span>}
        <SpinBox $wide={wide}>
            <SpinInput aria-label={label} defaultValue={value} />
            <SpinArrows><UpDown $up /><UpDown /></SpinArrows>
        </SpinBox>
        <span>{after}</span>
    </Spin>
);

const menus = ['文件(F)', '编辑(E)', '楼层(L)', '构件(N)', '绘图(D)', '修改(M)', '钢筋量(Q)', '视图(V)',
    '工具(T)', '云应用(Y)', 'BIM应用(I)', '在线服务(S)', '帮助(H)', '版本号(B)'];

// kids are [label, shortcut, icon]
const tree = [
    {kids: [['剪力墙', 'Q', 'wall'], ['梁', 'L', 'beam'], ['现浇板', 'B', 'slab']]},
    {name: '轴线'},
    {name: '柱'},
    {name: '墙'},
    {name: '门窗洞'},
    {name: '梁', kids: [['梁', 'L', 'beam'], ['圈梁', 'E', 'ring']]},
    {name: '板'},
    {name: '基础', kids: [
        ['基础梁', 'F', 'foundBeam'], ['筏板基础', 'M', 'raft'], ['集水坑', 'K', 'pit'], ['柱墩', 'Y', 'pier'],
        ['筏板主筋', 'R', 'mainBar'], ['筏板负筋', 'X', 'negBar'], ['独立基础', 'P', 'isolated'],
        ['条形基础', 'T', 'strip'], ['桩承台', 'V', 'cap'], ['承台梁', 'F', 'capBeam'], ['桩', 'U', 'pile'],
        ['基础板带', 'W', 'stripBand']]},
    {name: '其它'},
    {name: '自定义', kids: [['自定义点', '', 'customPoint'], ['自定义线', 'X', 'customLine'],
        ['自定义面', '', 'hatch'], ['尺寸标注', 'W', 'dimTree']]},
    {prefix: 'CAD', name: '识别', badge: true},
];

// [icon, size, running, focused]
const pinned = [['pinwheel', 22], ['swirlLine', 20]];
const apps = [['edge', 21], ['store', 22], ['explorer', 22], ['swirlRed', 22, 1], ['logo', 24, 1, 1],
    ['swirl', 23, 1], ['greenE', 22, 1], ['notes', 24, 1]];

const Apps = ({items, gap}) => (
    <AppGroup $gap={gap}>
        {items.map(([name, size, open, active]) => (
            <AppButton key={name} $open={open} $active={active} aria-label={name}>
                <Icon name={name} size={size} />
            </AppButton>
        ))}
    </AppGroup>
);

function Group ({prefix, name, kids, badge}) {
    return (<>
        {name && <Row>
            <Chevron aria-label={name}>
                <svg width="10" height="16" viewBox="0 0 10 16">
                    {kids
                        ? <path d="m1 6 4 4 4-4" fill="none" stroke="#333" strokeWidth="1.800" />
                        : <path d="m3 4 4 4-4 4" fill="none" stroke="#a0a0a0" strokeWidth="1.500" />}
                </svg>
            </Chevron>
            <Dots $w={2} />
            <Node>
                <Icon name={kids ? 'folderOpen' : 'folder'} />
                <span>{prefix && <Latin>{prefix}</Latin>}{name}</span>
            </Node>
            {badge && <><Icon name="mini" /><NewTag>NEW</NewTag></>}
        </Row>}
        {kids && kids.map(([label, key, icon], i) => (
            <Row key={label}>
                <Guide $root />
                <Guide $half={i === kids.length - 1} />
                <Dots $w={9} />
                <Node $on={label === '自定义线'}>
                    <Icon name={icon} />
                    <span>{label}{key && <Latin>({key})</Latin>}</span>
                </Node>
                {label === '自定义线' && <Icon name="mini" />}
            </Row>
        ))}
    </>);
}

function Model () {
    return (
        <Drawing viewBox="168 168 1197 507" preserveAspectRatio="xMinYMin slice" shapeRendering="crispEdges">
            <g stroke="#800000">
                <path d="M168 459 609 168" />
                <path d="M168 307 1116 675" />
            </g>
            <g stroke="#f00">
                <path d="M168 606 503 386" />
                <path d="M168 552 486 675" />
            </g>
            <path d="M488 333 738 168H963L819 264z" fill="#0069d2" />
            <path d="M819 264 963 168H1302L799 500z" fill="#005ab3" />
            <path d="M799 500 1302 168H1366V310L974 568z" fill="#0075ea" />
            <path d="M974 568 1366 310V355L970 615z" fill="#005ab3" />
            <path d="M488 333 819 264 799 500 974 568 970 615 501 433 505 385 495 381 496 359 486 355z" fill="#004f9a" />
            <path d="M540 392 556 388 541 400z" fill="#005ab3" />
            <path d="M556 388 757 354 747 479 541 400V398z" fill="#0075ea" />
            <path d="M540 400 536 445" stroke="#005ab3" strokeDasharray="6 9" />
            <g fill="none" stroke="#008000">
                <circle cx="181" cy="557" r="12.500" />
                <circle cx="181" cy="598" r="12.500" />
            </g>
            <g fill="#ddd" fontFamily="Liberation Mono" fontSize="13" fontWeight="bold" textAnchor="middle">
                <text x="181" y="561">4</text>
                <text x="181" y="602">A</text>
            </g>
            <path d="M223 625 246 610" stroke="#f00" strokeWidth="4" />
            <path d="m242 608 8-1-3 7z" fill="#f00" />
            <path d="M223 625 190 612" stroke="#0f0" strokeWidth="4" />
            <path d="m182 610 10-1-2 8z" fill="#0f0" />
            <path d="M223 623 226 590" stroke="#0080ff" strokeWidth="4" />
            <path d="m226 581 4 11-4 4-5-4z" fill="#0080ff" />
            <g fontFamily="Lato" fontSize="14" textAnchor="middle">
                <text x="221" y="590" fill="#0080ff">Z</text>
                <text x="197" y="612" fill="#0f0">Y</text>
                <text x="234" y="609" fill="#c00">X</text>
            </g>
        </Drawing>
    );
}

function App () {
    return (
        <Window>
            <GlobalStyle />
            <TitleBar>
                <Icon name="logo" />
                <Title>
                    广联达<TitleLatin>BIM</TitleLatin>钢筋算量软件
                    <TitleLatin> GGJ2013 - [C:\Users\Administrator.PC-20141127NRHM\Desktop\</TitleLatin>白龙村
                    <TitleLatin>-2017-06-12-10-02-47(2168</TitleLatin>版<TitleLatin>).GGJ12]</TitleLatin>
                </Title>
                <WindowButton aria-label="最小化"><Icon name="minimize" /></WindowButton>
                <WindowButton aria-label="还原"><Icon name="restore" /></WindowButton>
                <WindowButton aria-label="关闭"><Icon name="close" /></WindowButton>
                <Ball>72</Ball>
                <Ime>
                    <ImeLogo><Icon name="sogou" size={30} /></ImeLogo>
                    英
                    <Icon name="comma" size={14} />
                    <Icon name="mic" />
                    <Icon name="keyboard" />
                    <Icon name="person" />
                    <Icon name="shirt" size={14} />
                    <Icon name="wrench" size={15} />
                </Ime>
            </TitleBar>
            <MenuBar>
                {menus.map(m => <MenuItem key={m}>{m}</MenuItem>)}
                <MenuItem><Icon name="change" />新建变更<Arrow tight /></MenuItem>
                <MenuItem><Icon name="mascot" />广小二</MenuItem>
                <Account>
                    <MenuItem><Icon name="phone" />13907298339</MenuItem>
                    <Arrow />
                    <MenuItem>造价豆:0</MenuItem>
                    <Icon name="bell" />
                    <Overflow />
                </Account>
            </MenuBar>
            <ToolRow $h={30}>
                <Bar $w={150}>
                    <Tool icon="newFile" />
                    <Tool icon="open" /><Arrow />
                    <Tool icon="save" />
                    <Separator />
                    <Tool icon="undo" /><Arrow />
                    <Overflow />
                </Bar>
                <Bar $w={548}>
                    <Tool icon="define">定义</Tool>
                    <Tool icon="sigma">汇总计算</Tool>
                    <Tool icon="cloudCheck">云检查</Tool>
                    <Tool icon="slabTop" off>平齐板顶</Tool>
                    <Tool icon="binoculars">查找图元</Tool>
                    <Tool icon="glasses">查看钢筋量</Tool>
                    <Tool icon="batch">批量选择</Tool>
                    <Overflow />
                </Bar>
                <Bar $grow>
                    <Split><Tool icon="cube">三维</Tool><Arrow plain /></Split>
                    <Tool icon="topView">俯视</Tool><Arrow />
                    <Tool icon="orbit">动态观察</Tool>
                    <Tool icon="local3d" off>局部三维</Tool>
                    <Separator />
                    <Tool icon="full">全屏</Tool>
                    <Tool icon="zoom">缩放</Tool><Arrow />
                    <Tool icon="hand">平移</Tool><Arrow />
                    <Tool icon="rotateView">屏幕旋转</Tool><Arrow tight />
                    <Separator />
                    <Tool icon="floors">选择楼层</Tool>
                    <Overflow />
                </Bar>
            </ToolRow>
            <Body>
                <Panel>
                    <PanelTitle>
                        <PanelName>模块导航栏</PanelName>
                        <Icon name="pin" size={12} />
                        <Icon name="close" size={12} />
                    </PanelTitle>
                    <PanelButton>工程设置</PanelButton>
                    <PanelButton>绘图输入</PanelButton>
                    <PanelTools><Icon name="expandAll" /><Icon name="collapseAll" /></PanelTools>
                    <TreeBox>
                        <Tree>{tree.map((g, i) => <Group key={i} {...g} />)}</Tree>
                        <Scroll>
                            <ScrollButton aria-label="向上"><svg width="8" height="8"><path d="m1 6 3-4 3 4" fill="none" stroke="#505050" strokeWidth="2" /></svg></ScrollButton>
                            <Thumb />
                            <ScrollButton aria-label="向下"><svg width="8" height="8"><path d="m1 2 3 4 3-4" fill="none" stroke="#505050" strokeWidth="2" /></svg></ScrollButton>
                        </Scroll>
                    </TreeBox>
                    <PanelButton>单构件输入</PanelButton>
                    <PanelButton>报表预览</PanelButton>
                </Panel>
                <Work>
                    <ToolRow>
                        <Bar $grip>
                            <Grip />
                            <Tool icon="brush">删除</Tool><Separator />
                            <Tool icon="copy">复制</Tool>
                            <Tool icon="mirror">镜像</Tool><Separator />
                            <Tool icon="move">移动</Tool>
                            <Tool icon="rotate">旋转</Tool><Separator />
                            <Tool icon="extend">延伸</Tool>
                            <Tool icon="trim">修剪</Tool><Separator />
                            <Tool icon="breakIt">打断</Tool>
                            <Tool icon="merge">合并</Tool>
                            <Tool icon="divide" off>分割</Tool><Separator />
                            <Tool icon="align">对齐</Tool><Arrow tight />
                            <Tool icon="offset">偏移</Tool>
                            <Tool icon="stretch">拉伸</Tool><Separator />
                            <Tool icon="grips" off>设置夹点</Tool>
                        </Bar>
                    </ToolRow>
                    <ToolRow>
                        <Bar $grip>
                            <Grip />
                            <Combo w={57} value="基础层" label="楼层" />
                            <Combo w={69} value="自定义" label="构件类型" />
                            <Combo w={69} value="自定义线" label="构件种类" />
                            <Combo w={69} value="ZDYX-14" label="构件名称" />
                            <Separator />
                            <Tool icon="props">属性</Tool>
                            <Tool icon="editBar">编辑钢筋</Tool>
                            <Tool icon="list">构件列表</Tool>
                            <Tool icon="dropper">拾取构件</Tool>
                        </Bar>
                        <Bar $grip $push="69px">
                            <Grip />
                            <Tool icon="twoPoint">两点</Tool>
                            <Tool icon="parallel">平行</Tool>
                            <Tool icon="pointAngle" on="deep">点角</Tool><Arrow on />
                            <Tool icon="threeAxis">三点辅轴</Tool><Arrow />
                            <Tool icon="brush">删除辅轴</Tool>
                            <Tool icon="dimension">尺寸标注</Tool><Arrow />
                        </Bar>
                    </ToolRow>
                    <ToolRow $h={29}>
                        <Bar $grip>
                            <Grip />
                            <Tool icon="cursor" on>选择</Tool><Arrow />
                            <Separator />
                            <Tool icon="line">直线</Tool>
                            <Tool icon="addLength">点加长度</Tool>
                            <Tool icon="arc">三点画弧</Tool><Arrow />
                            <Combo w={55} value="" label="画弧方式" white />
                            <Tool icon="rect">矩形</Tool><Separator />
                            <Tool icon="smart">智能布置</Tool><Arrow tight />
                        </Bar>
                        <Bar $grip $push="auto" $w={33}><Grip /></Bar>
                    </ToolRow>
                    <View><Model /></View>
                    <ToolRow $h={32} $close>
                        <Bar $grip>
                            <Grip />
                            <Tool icon="ortho">正交</Tool>
                            <Tool icon="snap" on>对象捕捉</Tool>
                            <Tool icon="dynInput" on>动态输入</Tool>
                        </Bar>
                        <Bar $grip>
                            <Grip />
                            <Tool icon="cross">交点</Tool>
                            <Tool icon="perp" on>垂点</Tool>
                            <Tool icon="mid" on>中点</Tool>
                            <Tool icon="vertex">顶点</Tool>
                            <Tool icon="coord">坐标</Tool>
                        </Bar>
                        <Bar $grip>
                            <Grip />
                            <Combo w={58} value="不偏移" label="偏移方式" white />
                            <Separator />
                            <Spinner before="X=" after="mm" value="0" label="X" />
                            <Spinner before="Y=" after="mm" value="0" label="Y" />
                            <Separator />
                            <Check><Tick type="checkbox" />旋转</Check>
                            <Spinner after="°" value="0.000" wide label="旋转角度" />
                        </Bar>
                    </ToolRow>
                </Work>
            </Body>
            <StatusBar>
                <Cell $w={148}><Latin>X=12651 Y=3043</Latin></Cell>
                <Cell $w={78}>层高<Latin>:3.55m</Latin></Cell>
                <Cell $w={98}>底标高<Latin>:-3.58m</Latin></Cell>
                <Cell $w={48}><Latin>1(1)</Latin></Cell>
                <Cell>按鼠标左键指定第一个角点，或拾取构件图元</Cell>
                <Cell $w={70}><Latin>858.4 FPS</Latin></Cell>
            </StatusBar>
            <Taskbar>
                <Start aria-label="开始"><Icon name="winLogo" /></Start>
                <Search>
                    <Icon name="ringO" size={22} />
                    <SearchInput placeholder="在这里输入你要搜索的内容" aria-label="搜索" />
                    <Icon name="micLine" />
                </Search>
                <Apps items={pinned} gap={2} />
                <Apps items={apps} gap={6} />
                <Tray>
                    <TwoLines $w={68}>26%<br />CPU使用</TwoLines>
                    <Icon name="up" />
                    <Icon name="battery" />
                    <Icon name="wifi" />
                    <Icon name="sound" />
                    <Lang>中</Lang>
                    <Icon name="sogou" />
                    <TwoLines $w={78}>11:06<br />2017/6/21</TwoLines>
                    <Notice><Icon name="notice" /><NoticeCount>3</NoticeCount></Notice>
                    <ShowDesktop />
                </Tray>
            </Taskbar>
        </Window>
    );
}

export default App;
